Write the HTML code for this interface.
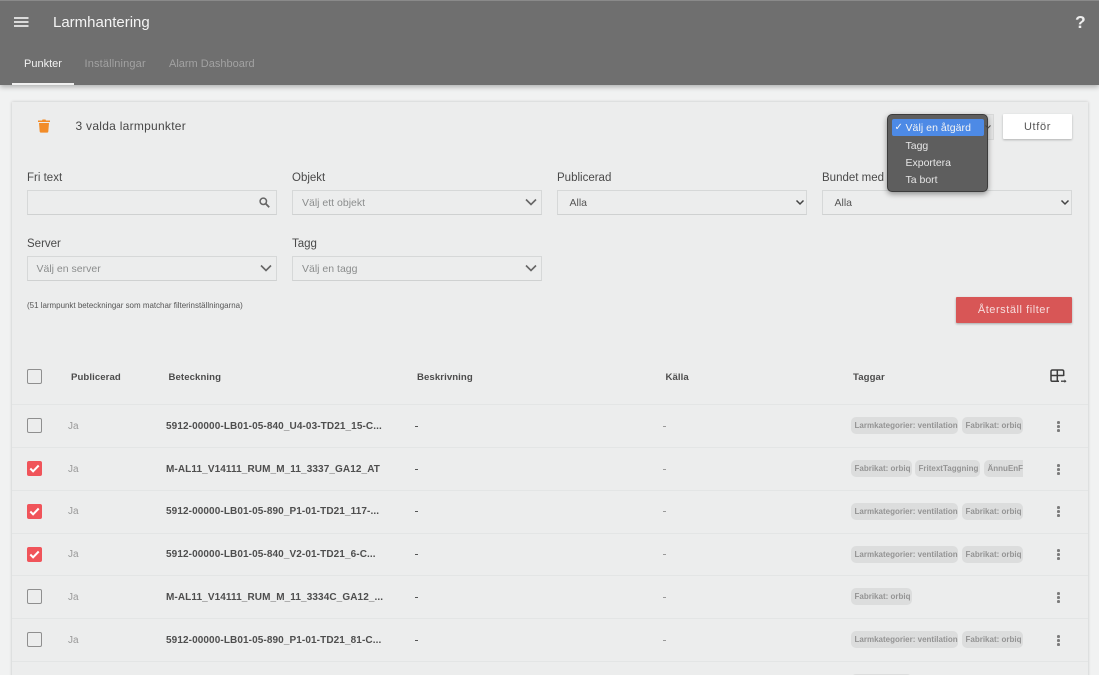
<!DOCTYPE html>
<html lang="sv"><head><meta charset="utf-8"><title>Larmhantering</title>
<style>
*{box-sizing:border-box}
html,body{margin:0;padding:0}
body{width:1099px;height:675px;overflow:hidden;background:#f1f2f2;font-family:"Liberation Sans",sans-serif;position:relative;color:#444}
#w{position:absolute;left:0;top:0;width:1099px;height:675px;overflow:hidden;filter:blur(.35px)}
.a{position:absolute;white-space:nowrap}
#hd{left:0;top:0;width:1099px;height:85px;background:#6f6f6f;box-shadow:0 2px 5px rgba(0,0,0,.28);border-top:1px solid #8a8a8a}
#card{left:12px;top:102px;width:1076px;height:600px;background:#eceded;box-shadow:0 0 3px rgba(0,0,0,.2)}
.lb{font-size:11.5px;color:#4a4a4a;line-height:14px}
.f{height:25px;border:1px solid #d6d8d8;border-bottom-color:#cfd1d1;background:#eceded}
.ph{font-size:10.5px;color:#8b8d8d;line-height:14px}
.al{font-size:10.5px;color:#555;line-height:14px}
.th{font-size:9.6px;font-weight:bold;color:#4c4c4c;line-height:12px;letter-spacing:.08px}
.ln{left:12px;width:1076px;height:1px;background:#e3e5e5}
.ja{left:68px;font-size:10px;color:#999;line-height:12px}
.nm{left:166px;font-size:10px;font-weight:bold;color:#4e4e4e;line-height:12px;letter-spacing:.1px}
.d1{left:415px;width:3px;height:1px;background:#555}
.d2{left:663px;width:3px;height:1px;background:#999}
.cb{left:27px;width:15px;height:15px;border:1.5px solid #8f8f8f;border-radius:2px}
.cc{left:27px;width:15px;height:15px;background:#f0545a;border-radius:2px}
.tg{height:17px;border-radius:5px;background:#dcdddd;font-size:8px;font-weight:bold;color:#949494;line-height:17px;padding:0 3.5px;text-align:left;overflow:hidden}
.t1{left:851px;width:107px}
.t2{left:962px;width:61px}
.t3{left:851px;width:61px}
.dots{left:1057px;width:3px}
.dots i{display:block;width:2.6px;height:2.6px;border-radius:50%;background:#7c7c7c;margin-bottom:1.6px}
.ch{width:14px;height:9px}
.dd{left:905.5px;font-size:10.5px;color:#e6e6e6;line-height:13px}
</style></head><body><div id="w">
<div class="a" id="hd"></div>
<svg class="a" style="left:14px;top:17px" width="15" height="10"><path d="M0 1h14.5M0 5h14.5M0 9h14.5" stroke="#fff" stroke-width="1.5"/></svg>
<div class="a" style="left:53px;top:14px;font-size:15px;color:#f4f4f4;line-height:17px">Larmhantering</div>
<div class="a" style="left:1075px;top:12px;font-size:17.5px;font-weight:bold;color:#eeeeee;line-height:20px">?</div>
<div class="a" style="left:24px;top:58px;font-size:11px;color:#f2f2f2;line-height:13px">Punkter</div>
<div class="a" style="left:84.5px;top:58px;font-size:11px;color:#a2a2a2;line-height:13px;letter-spacing:.15px">Inställningar</div>
<div class="a" style="left:169px;top:58px;font-size:11px;color:#a2a2a2;line-height:13px">Alarm Dashboard</div>
<div class="a" style="left:12px;top:83px;width:62px;height:2px;background:#f0f0f0"></div>

<div class="a" id="card"></div>
<svg class="a" style="left:38px;top:119px" width="12" height="14" viewBox="0 0 12 14"><path d="M0 1.5h4L4.5 .5h3L8 1.5h4V3H0zM1 4h10l-.7 8.6q-.1 1-1.1 1H2.8q-1 0-1.1-1z" fill="#f28c28"/></svg>
<div class="a" style="left:75.5px;top:119px;font-size:12px;color:#474747;line-height:14px;letter-spacing:.27px">3 valda larmpunkter</div>

<div class="a" style="left:975px;top:114px;width:19px;height:26px;background:#e4e5e5;border:1px solid #d8d9d9"></div>
<div class="a" style="left:1003px;top:114px;width:69px;height:25px;background:#fff;box-shadow:0 1px 2px rgba(0,0,0,.25);border-radius:1px;font-size:11px;color:#555;line-height:27px;text-align:center;letter-spacing:.65px">Utför</div>

<div class="a lb" style="left:27px;top:171px">Fri text</div>
<div class="a lb" style="left:292px;top:171px">Objekt</div>
<div class="a lb" style="left:557px;top:171px">Publicerad</div>
<div class="a lb" style="left:822px;top:171px">Bundet med</div>
<div class="a lb" style="left:27px;top:237px">Server</div>
<div class="a lb" style="left:292px;top:237px">Tagg</div>

<div class="a f" style="left:27px;top:190px;width:250px"></div>
<div class="a f" style="left:292px;top:190px;width:250px"></div>
<div class="a f" style="left:557px;top:190px;width:250px"></div>
<div class="a f" style="left:822px;top:190px;width:250px"></div>
<div class="a f" style="left:27px;top:256px;width:250px"></div>
<div class="a f" style="left:292px;top:256px;width:250px"></div>

<svg class="a" style="left:259px;top:197px" width="11" height="11" viewBox="0 0 11 11"><circle cx="4.3" cy="4.3" r="3.2" fill="none" stroke="#666" stroke-width="1.5"/><path d="M6.8 6.8l3.4 3.4" stroke="#666" stroke-width="1.8"/></svg>
<div class="a ph" style="left:302px;top:196px">Välj ett objekt</div>
<div class="a al" style="left:569.5px;top:196px">Alla</div>
<div class="a al" style="left:834.5px;top:196px">Alla</div>
<div class="a ph" style="left:36.5px;top:262px">Välj en server</div>
<div class="a ph" style="left:302px;top:262px">Välj en tagg</div>

<svg class="a ch" style="left:523.5px;top:198px" viewBox="0 0 14 9"><path d="M2 1.5l5 5 5-5" fill="none" stroke="#666" stroke-width="1.6"/></svg>
<svg class="a ch" style="left:258.5px;top:264px" viewBox="0 0 14 9"><path d="M2 1.5l5 5 5-5" fill="none" stroke="#666" stroke-width="1.6"/></svg>
<svg class="a ch" style="left:523.5px;top:264px" viewBox="0 0 14 9"><path d="M2 1.5l5 5 5-5" fill="none" stroke="#666" stroke-width="1.6"/></svg>
<svg class="a" style="left:795px;top:199px" width="10" height="7" viewBox="0 0 10 7"><path d="M1.5 1.5L5 5l3.5-3.5" fill="none" stroke="#444" stroke-width="1.5"/></svg>
<svg class="a" style="left:1060px;top:199px" width="10" height="7" viewBox="0 0 10 7"><path d="M1.5 1.5L5 5l3.5-3.5" fill="none" stroke="#444" stroke-width="1.5"/></svg>

<div class="a" style="left:27px;top:301px;font-size:7.96px;color:#555;line-height:10px">(51 larmpunkt beteckningar som matchar filterinställningarna)</div>
<div class="a" style="left:956px;top:297px;width:116px;height:26px;background:#d85656;box-shadow:0 1px 2px rgba(0,0,0,.3);border-radius:1px;font-size:11px;color:#f6dcdc;line-height:27px;text-align:center;letter-spacing:.55px">Återställ filter</div>

<div class="a cb" style="top:369px"></div>
<div class="a th" style="left:71px;top:372px">Publicerad</div>
<div class="a th" style="left:168.5px;top:372px">Beteckning</div>
<div class="a th" style="left:417px;top:372px">Beskrivning</div>
<div class="a th" style="left:665.5px;top:372px">Källa</div>
<div class="a th" style="left:853px;top:372px">Taggar</div>
<svg class="a" style="left:1050px;top:369px" width="17" height="14" viewBox="0 0 17 14"><path d="M13.7 7V2.500Q13.700 1 12.200 1H2.500Q1 1 1 2.500V11q0 1.200 1.200 1.200H9M1 6.500h12.700M7.300 1v11.200" fill="none" stroke="#3d3d3d" stroke-width="1.500"/><path d="M11 12.200h4" stroke="#3d3d3d" stroke-width="1.300"/><path d="M14.500 10.500l2 1.700-2 1.700z" fill="#3d3d3d"/></svg>

<div class="a ln" style="top:404px"></div>
<div class="a ln" style="top:447px"></div>
<div class="a ln" style="top:490px"></div>
<div class="a ln" style="top:533px"></div>
<div class="a ln" style="top:575px"></div>
<div class="a ln" style="top:618px"></div>
<div class="a ln" style="top:661px"></div>

<div class="a cb" style="top:418px"></div>
<div class="a ja" style="top:421px">Ja</div>
<div class="a nm" style="top:421px">5912-00000-LB01-05-840_U4-03-TD21_15-C...</div>
<div class="a d1" style="top:426px"></div><div class="a d2" style="top:426px"></div>
<div class="a tg t1" style="top:417px">Larmkategorier: ventilation</div>
<div class="a tg t2" style="top:417px">Fabrikat: orbiq</div>
<div class="a dots" style="top:421px"><i></i><i></i><i></i></div>

<div class="a cc" style="top:461px"></div>
<svg class="a" style="left:29px;top:464px" width="11" height="9" viewBox="0 0 11 9"><path d="M1.300 4.500l2.800 2.800 5.600-5.800" fill="none" stroke="#fff" stroke-width="2"/></svg>
<div class="a ja" style="top:464px">Ja</div>
<div class="a nm" style="top:464px">M-AL11_V14111_RUM_M_11_3337_GA12_AT</div>
<div class="a d1" style="top:469px"></div><div class="a d2" style="top:469px"></div>
<div class="a tg t3" style="top:460px">Fabrikat: orbiq</div>
<div class="a tg" style="left:915px;top:460px;width:65px">FritextTaggning</div>
<div class="a tg" style="left:984px;top:460px;width:39px;border-radius:5px 0 0 5px">ÄnnuEnFritext</div>
<div class="a dots" style="top:464px"><i></i><i></i><i></i></div>

<div class="a cc" style="top:504px"></div>
<svg class="a" style="left:29px;top:507px" width="11" height="9" viewBox="0 0 11 9"><path d="M1.300 4.500l2.800 2.800 5.600-5.800" fill="none" stroke="#fff" stroke-width="2"/></svg>
<div class="a ja" style="top:506px">Ja</div>
<div class="a nm" style="top:506px">5912-00000-LB01-05-890_P1-01-TD21_117-...</div>
<div class="a d1" style="top:511px"></div><div class="a d2" style="top:511px"></div>
<div class="a tg t1" style="top:503px">Larmkategorier: ventilation</div>
<div class="a tg t2" style="top:503px">Fabrikat: orbiq</div>
<div class="a dots" style="top:506px"><i></i><i></i><i></i></div>

<div class="a cc" style="top:547px"></div>
<svg class="a" style="left:29px;top:550px" width="11" height="9" viewBox="0 0 11 9"><path d="M1.300 4.500l2.800 2.800 5.600-5.800" fill="none" stroke="#fff" stroke-width="2"/></svg>
<div class="a ja" style="top:549px">Ja</div>
<div class="a nm" style="top:549px">5912-00000-LB01-05-840_V2-01-TD21_6-C...</div>
<div class="a d1" style="top:554px"></div><div class="a d2" style="top:554px"></div>
<div class="a tg t1" style="top:546px">Larmkategorier: ventilation</div>
<div class="a tg t2" style="top:546px">Fabrikat: orbiq</div>
<div class="a dots" style="top:549px"><i></i><i></i><i></i></div>

<div class="a cb" style="top:589px"></div>
<div class="a ja" style="top:592px">Ja</div>
<div class="a nm" style="top:592px">M-AL11_V14111_RUM_M_11_3334C_GA12_...</div>
<div class="a d1" style="top:597px"></div><div class="a d2" style="top:597px"></div>
<div class="a tg t3" style="top:588px">Fabrikat: orbiq</div>
<div class="a dots" style="top:592px"><i></i><i></i><i></i></div>

<div class="a cb" style="top:632px"></div>
<div class="a ja" style="top:635px">Ja</div>
<div class="a nm" style="top:635px">5912-00000-LB01-05-890_P1-01-TD21_81-C...</div>
<div class="a d1" style="top:640px"></div><div class="a d2" style="top:640px"></div>
<div class="a tg t1" style="top:631px">Larmkategorier: ventilation</div>
<div class="a tg t2" style="top:631px">Fabrikat: orbiq</div>
<div class="a dots" style="top:635px"><i></i><i></i><i></i></div>

<div class="a tg t3" style="top:674px">Fabrikat: orbiq</div>

<div class="a" style="left:887px;top:114px;width:101px;height:78px;background:#5e5e5e;border:1px solid #3c3c3c;border-radius:5px;box-shadow:0 2px 6px rgba(0,0,0,.4)"></div>
<div class="a" style="left:891.5px;top:119px;width:92px;height:17px;background:#4d8ae6;border-radius:2px"></div>
<div class="a" style="left:894.5px;top:122px;font-size:10px;color:#f4f4f4;line-height:12px">✓</div>
<div class="a dd" style="top:122px;color:#f4f4f4;letter-spacing:.05px">Välj en åtgärd</div>
<div class="a dd" style="top:140px">Tagg</div>
<div class="a dd" style="top:157px">Exportera</div>
<div class="a dd" style="top:174px">Ta bort</div>
<svg class="a" style="left:984.5px;top:125px" width="6" height="4"><path d="M.5.500L3 3 5.500.500" fill="none" stroke="#444"/></svg>
</div></body></html>
